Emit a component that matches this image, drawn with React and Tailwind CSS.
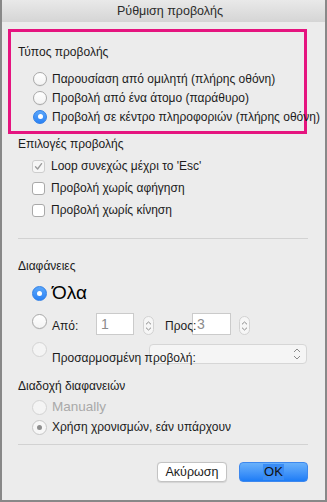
import React from "react";

const font = { fontFamily: '"Liberation Sans", Arial, sans-serif' };

function Radio({ kind = "off", size = 14 }) {
  const base = "shrink-0 rounded-full flex items-center justify-center box-border";
  const dim = size === 15 ? "w-[15px] h-[15px]" : "w-[14px] h-[14px]";
  if (kind === "on")
    return (
      <div className={`${base} ${dim} bg-linear-to-b from-[#5aa6fa] to-[#2a82f5] border border-[#2f7fe6]`}>
        <div className="w-[5px] h-[5px] rounded-full bg-white" />
      </div>
    );
  if (kind === "disabled")
    return <div className={`${base} ${dim} bg-[#f4f4f4] border border-[#d3d3d3]`} />;
  if (kind === "disabledOn")
    return (
      <div className={`${base} ${dim} bg-[#f7f7f7] border border-[#c6c6c6]`}>
        <div className="w-[5px] h-[5px] rounded-full bg-[#8e8e8e]" />
      </div>
    );
  return (
    <div
      className={`${base} ${dim} bg-linear-to-b from-white to-[#f3f3f3] border border-[#a8a8a8] shadow-[0_0.5px_0.5px_rgba(0,0,0,0.08)]`}
    />
  );
}

function Checkbox({ kind = "off" }) {
  if (kind === "disabledOn")
    return (
      <div className="w-[13px] h-[13px] shrink-0 rounded-[3px] bg-[#f6f6f6] border border-[#cdcdcd] flex items-center justify-center">
        <svg width="9" height="9" viewBox="0 0 9 9">
          <path d="M1.5 4.8 L3.6 7 L7.6 1.6" fill="none" stroke="#9a9a9a" strokeWidth="1.3" strokeLinecap="round" strokeLinejoin="round" />
        </svg>
      </div>
    );
  return <div className="w-[13px] h-[13px] shrink-0 rounded-[3px] bg-white border border-[#a9a9a9]" />;
}

function Stepper() {
  return (
    <div className="w-[11px] h-[19px] rounded-full border border-[#d2d2d2] bg-[#f6f6f6] flex flex-col items-center justify-center gap-[2px]">
      <svg width="7" height="4" viewBox="0 0 7 4">
        <path d="M1 3.3 L3.5 1 L6 3.3" fill="none" stroke="#8a8a8a" strokeWidth="1" />
      </svg>
      <svg width="7" height="4" viewBox="0 0 7 4">
        <path d="M1 0.7 L3.5 3 L6 0.7" fill="none" stroke="#8a8a8a" strokeWidth="1" />
      </svg>
    </div>
  );
}

export default function App() {
  return (
    <div
      style={font}
      className="w-[327px] h-[502px] box-border bg-[#ececec] border-x-2 border-b-2 border-[#888888] flex flex-col text-[12px] leading-[16px] text-[#1b1b1b] overflow-hidden"
    >
      {/* Title bar */}
      <div className="h-[22px] shrink-0 bg-linear-to-b from-[#e9e9e9] to-[#d5d5d5] flex items-center justify-center pl-[13px] text-[12.5px] text-[#2b2b2b]">
        Ρύθμιση προβολής
      </div>

      {/* Pink highlight box */}
      <div className="ml-[6px] mt-[7px] w-[299px] h-[105px] box-border border-[3px] border-[#e5147f] flex flex-col">
        <div className="pl-[7px] pt-[12px] h-[28px]">Τύπος προβολής</div>
        <div className="mt-[9px] pl-[22px] flex flex-col">
          <div className="h-[19px] flex items-center gap-[5px] whitespace-nowrap">
            <Radio />
            <span>Παρουσίαση από ομιλητή (πλήρης οθόνη)</span>
          </div>
          <div className="h-[19px] flex items-center gap-[5px] whitespace-nowrap">
            <Radio />
            <span>Προβολή από ένα άτομο (παράθυρο)</span>
          </div>
          <div className="h-[19px] flex items-center gap-[5px] whitespace-nowrap">
            <Radio kind="on" />
            <span>Προβολή σε κέντρο πληροφοριών (πλήρης οθόνη)</span>
          </div>
        </div>
      </div>

      <div className="ml-[16px] mt-[2px] h-[16px]">Επιλογές προβολής</div>
      <div className="mt-[3px] ml-[30px] flex flex-col">
        <div className="h-[22px] flex items-center gap-[6px]">
          <Checkbox kind="disabledOn" />
          <span>Loop συνεχώς μέχρι το 'Esc'</span>
        </div>
        <div className="h-[22px] flex items-center gap-[6px]">
          <Checkbox />
          <span>Προβολή χωρίς αφήγηση</span>
        </div>
        <div className="h-[22px] flex items-center gap-[6px]">
          <Checkbox />
          <span>Προβολή χωρίς κίνηση</span>
        </div>
      </div>

      <div className="ml-[16px] mt-[17px] w-[290px] h-px bg-[#d2d2d2]" />

      <div className="ml-[16px] mt-[19px] h-[16px]">Διαφάνειες</div>

      <div className="ml-[30px] mt-[8px] h-[22px] flex items-center gap-[5px]">
        <Radio kind="on" size={15} />
        <span className="text-[19px] leading-[22px] text-black">Όλα</span>
      </div>

      <div className="ml-[30px] mt-[8px] h-[24px] flex items-start">
        <div className="mt-[2px]">
          <Radio size={15} />
        </div>
        <span className="ml-[5px] mt-[6px] w-[44px]">Από:</span>
        <div className="mt-[1px] w-[38px] h-[22px] box-border bg-white border border-[#cbcbcb] pl-[4px] flex items-center text-[#8c8c8c] text-[14px]">
          1
        </div>
        <div className="ml-[9px] mt-[4px]">
          <Stepper />
        </div>
        <span className="relative z-10 ml-[11px] mt-[6px] w-[27px] whitespace-nowrap">Προς:</span>
        <div className="mt-[1px] w-[39px] h-[22px] box-border bg-white border border-[#cbcbcb] pl-[4px] flex items-center text-[#8c8c8c] text-[14px]">
          3
        </div>
        <div className="ml-[8px] mt-[4px]">
          <Stepper />
        </div>
      </div>

      <div className="ml-[30px] mt-[6px] h-[24px] flex items-start">
        <div className="mt-[0px]">
          <Radio kind="disabled" size={15} />
        </div>
        <span className="relative z-10 ml-[5px] mt-[8px] w-[97px] whitespace-nowrap">Προσαρμοσμένη προβολή:</span>
        <div className="mt-[2px] w-[158px] h-[20px] box-border rounded-[4px] bg-[#f5f5f5] border border-[#d6d6d6] flex items-center justify-end pr-[5px]">
          <div className="flex flex-col items-center gap-[2px]">
            <svg width="8" height="5" viewBox="0 0 8 5">
              <path d="M1 4 L4 1 L7 4" fill="none" stroke="#8a8a8a" strokeWidth="1" />
            </svg>
            <svg width="8" height="5" viewBox="0 0 8 5">
              <path d="M1 1 L4 4 L7 1" fill="none" stroke="#8a8a8a" strokeWidth="1" />
            </svg>
          </div>
        </div>
      </div>

      <div className="ml-[16px] mt-[12px] h-[16px]">Διαδοχή διαφανειών</div>
      <div className="ml-[30px] mt-[3px] flex flex-col">
        <div className="h-[20px] flex items-center gap-[5px]">
          <Radio kind="disabled" size={15} />
          <span className="text-[#a9a9a9] text-[13.5px]">Manually</span>
        </div>
        <div className="h-[20px] flex items-center gap-[5px]">
          <Radio kind="disabledOn" size={15} />
          <span>Χρήση χρονισμών, εάν υπάρχουν</span>
        </div>
      </div>

      <div className="ml-[16px] mt-[7px] w-[290px] h-px bg-[#d2d2d2]" />

      <div className="mt-[17px] flex items-center justify-end pr-[17px] gap-[12px]">
        <button className="w-[70px] h-[20px] box-border rounded-[4px] bg-white border border-[#c3c3c3] shadow-[0_0.5px_1px_rgba(0,0,0,0.1)] text-[12.5px] text-[#1b1b1b] flex items-center justify-center">
          Ακύρωση
        </button>
        <button className="w-[69px] h-[20px] box-border rounded-[4px] bg-linear-to-b from-[#69b1fb] to-[#1c7cf6] border border-[#3d88ee] text-[13px] text-[#111] flex items-center justify-center">
          <span className="bg-[#3a8cf4] px-[1px]">OK</span>
        </button>
      </div>
    </div>
  );
}
